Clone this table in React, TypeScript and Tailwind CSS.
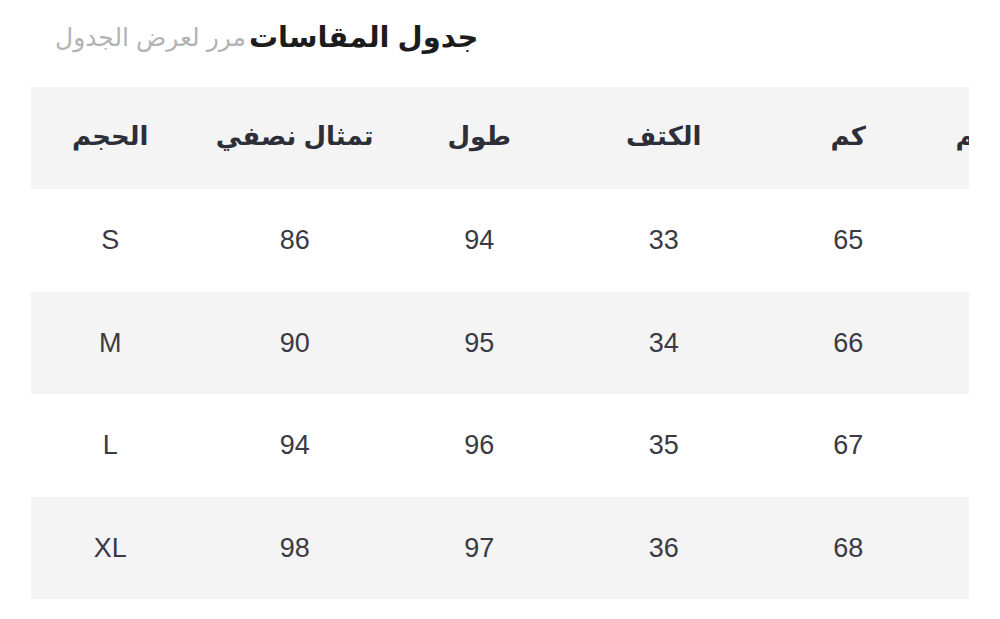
import React from "react";

const rows = [
  ["S", "86", "94", "33", "65", ""],
  ["M", "90", "95", "34", "66", ""],
  ["L", "94", "96", "35", "67", ""],
  ["XL", "98", "97", "36", "68", ""],
];
const headers = ["الحجم", "تمثال نصفي", "طول", "الكتف", "كم", "محيط الكم"];

export default function App() {
  return (
    <div className="w-[1000px] h-[619px] bg-white overflow-hidden" style={{ fontFamily: '"Liberation Sans", "DejaVu Sans", sans-serif' }}>
      <div className="flex items-center h-[72px] pl-[55px] pt-[2px]">
        <span className="text-[25px] text-[#b3b3b3] leading-none" dir="rtl">مرر لعرض الجدول</span>
        <span className="text-[29px] font-bold text-[#1c1c1c] leading-none ml-[3px]" dir="rtl">جدول المقاسات</span>
      </div>
      <div className="ml-[31px] mt-[15px] w-[938px] overflow-hidden">
        <div className="ml-[-13px] w-[1107px]">
          <div className="flex h-[102px] items-center bg-[#f4f4f4]">
            {headers.map((h, i) => (
              <div key={i} className={`w-[184.5px] shrink-0 text-center text-[26px] font-bold text-[#2e2e38] pb-[4px] whitespace-nowrap ${i === 5 ? "pr-[20px]" : ""}`} dir="rtl">
                {h}
              </div>
            ))}
          </div>
          {rows.map((r, ri) => (
            <div key={ri} className={`flex h-[102.5px] items-center ${ri % 2 === 1 ? "bg-[#f4f4f4]" : "bg-white"}`}>
              {r.map((c, ci) => (
                <div key={ci} className="w-[184.5px] shrink-0 text-center text-[27px] text-[#3a3a44]">
                  {c}
                </div>
              ))}
            </div>
          ))}
        </div>
      </div>
    </div>
  );
}
